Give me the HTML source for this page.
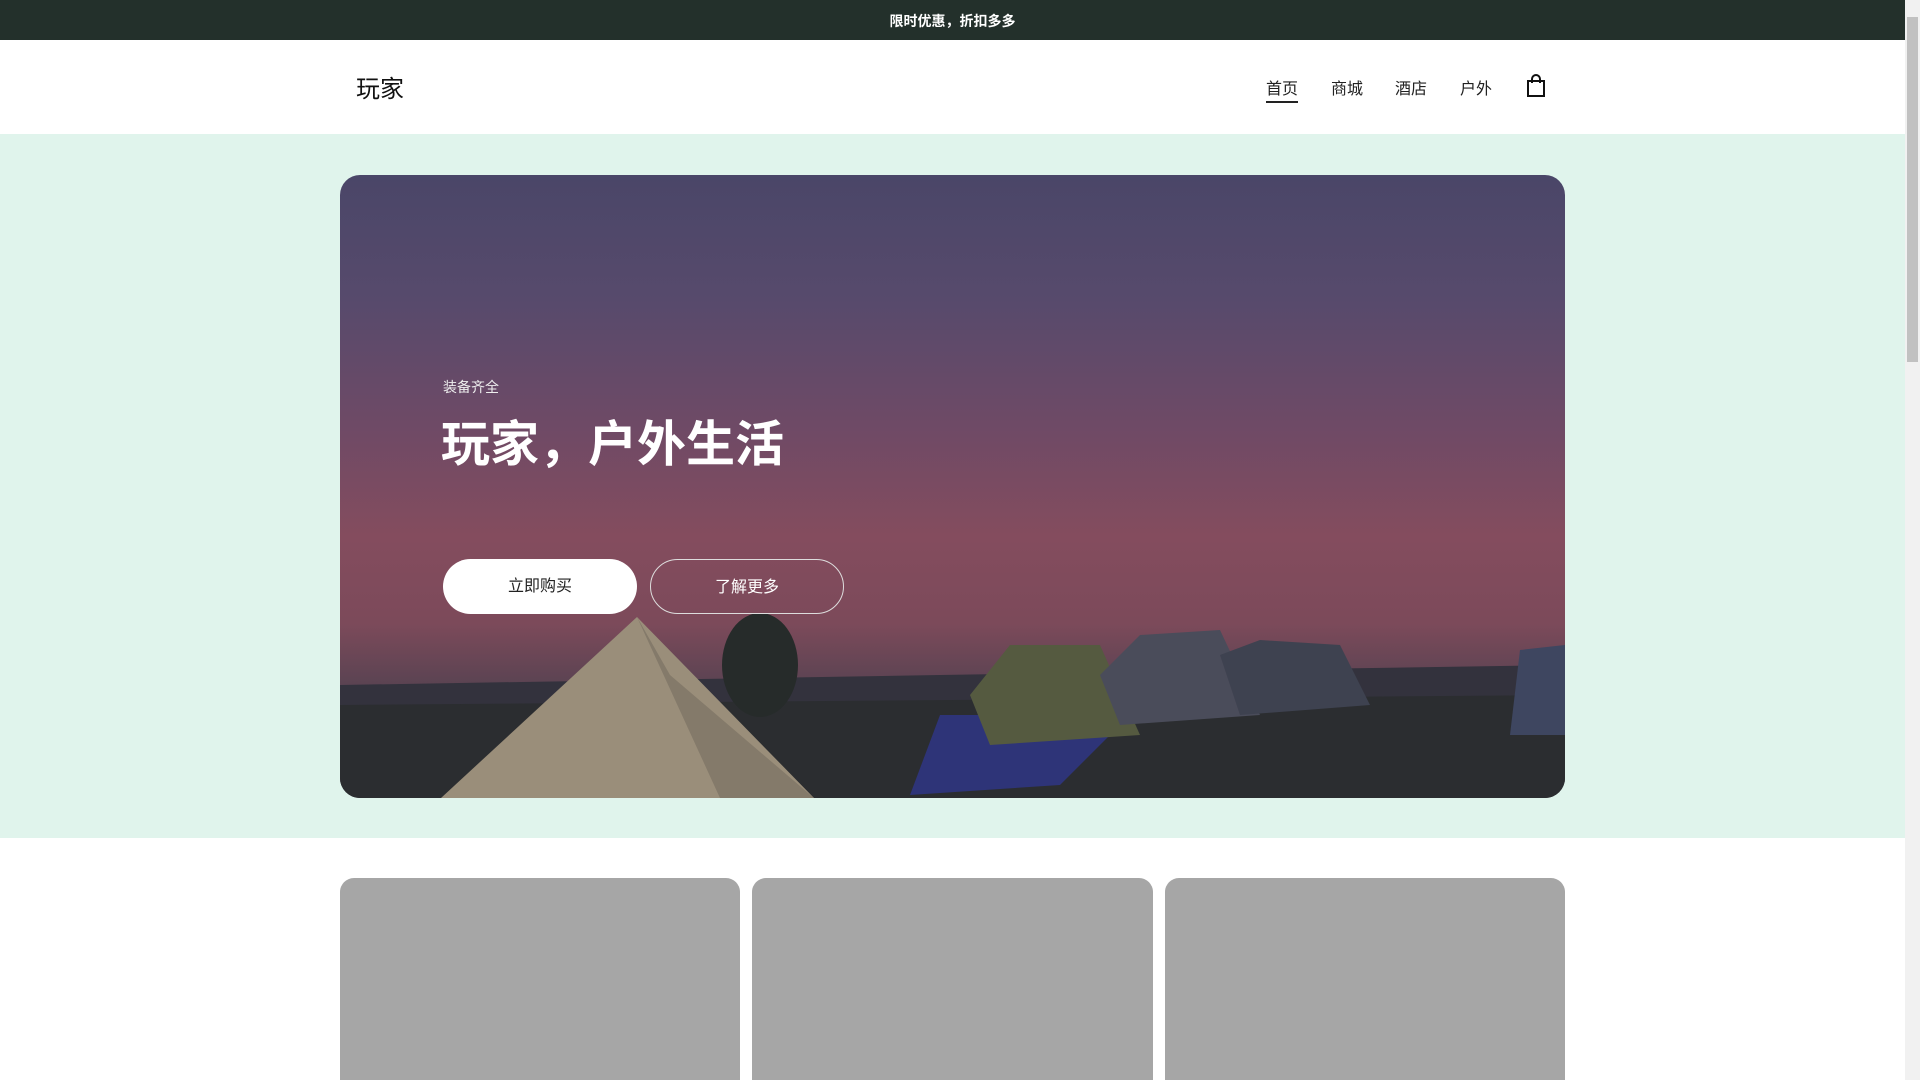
<!DOCTYPE html>
<html><head><meta charset="utf-8">
<style>
*{margin:0;padding:0;box-sizing:border-box}
html,body{width:1920px;height:1080px;overflow:hidden}
body{font-family:"Liberation Sans","Noto Sans CJK SC",sans-serif;background:#fff;position:relative}
#w{position:absolute;left:0;top:0;width:1905px;height:1080px;overflow:hidden}
.top{height:40px;background:#23302b;color:#fff;font-weight:bold;font-size:14px;text-align:center;line-height:42px;}
.nav a{position:absolute;top:80px;font-size:16px;color:#222;text-decoration:none;line-height:20px}
.mint{background:#e0f4ec;height:704px;position:relative;margin-top:94px}
.hero{position:absolute;left:340px;top:41px;width:1225px;height:623px;border-radius:20px;overflow:hidden;
background:linear-gradient(180deg,#4a4668 0%,#574a6c 20%,#6e4a66 40%,#844c5e 58%,#7c4a5a 72%,#5a4352 82%);}
.sub{position:absolute;left:103px;top:202px;color:#eee;font-size:14px}
.title{position:absolute;left:101px;top:240px;color:#fff;font-size:49px;font-weight:bold;line-height:60px}
.btn{position:absolute;top:384px;width:194px;height:55px;border-radius:28px;font-size:16px;text-align:center;line-height:55px}
.b1{left:103px;background:#fff;color:#222}
.b2{left:310px;border:1.5px solid #ddd;color:#fff}
.cards{position:absolute;top:878px;left:340px;width:1225px;display:flex;gap:12px}
.card{flex:1;height:300px;background:#a6a6a6;border-radius:14px}
#sb{position:absolute;right:0;top:0;width:15px;height:1080px;background:#f1f1f1}
#th{position:absolute;left:2px;top:17px;width:11px;height:345px;background:#c1c1c1}
</style></head><body>
<div id="w">
<div class="top">限时优惠，折扣多多</div>
<div style="position:absolute;left:356px;top:69px;font-size:24px;color:#111;">玩家</div>
<div class="nav">
<a style="left:1266px;border-bottom:2px solid #222;padding-bottom:1px">首页</a>
<a style="left:1331px">商城</a>
<a style="left:1395px">酒店</a>
<a style="left:1460px">户外</a>
</div>
<svg style="position:absolute;left:1525px;top:74px" width="22" height="24" viewBox="0 0 22 24"><path d="M3 7h16v15H3z" fill="none" stroke="#111" stroke-width="2"/><path d="M7 9V5a4 4 0 0 1 8 0v4" fill="none" stroke="#111" stroke-width="2"/></svg>
<div class="mint">
<div class="hero">
<svg width="1225" height="623" viewBox="0 0 1225 623" style="position:absolute;left:0;top:0">
<path d="M0 510 L300 505 L600 500 L900 495 L1225 490 L1225 623 L0 623Z" fill="#33323d"/>
<path d="M0 530 L1225 520 L1225 623 L0 623Z" fill="#2b2d30"/>
<ellipse cx="420" cy="490" rx="38" ry="52" fill="#262b2a"/>
<path d="M600 540 L790 540 L720 610 L570 620Z" fill="#2e3478"/>
<path d="M630 520 L670 470 L760 470 L800 560 L650 570Z" fill="#555a40"/>
<path d="M760 500 L800 460 L880 455 L920 540 L780 550Z" fill="#4a4c5a"/>
<path d="M880 480 L920 465 L1000 470 L1030 530 L900 540Z" fill="#3e4250"/>
<path d="M1180 475 L1225 470 L1225 560 L1170 560Z" fill="#3e4660"/>
<path d="M297 442 L101 623 L474 623 Z" fill="#9a8e7a"/>
<path d="M297 442 L330 500 L474 623 L380 623Z" fill="#847a6a"/>
</svg>
<div class="sub">装备齐全</div>
<div class="title">玩家，户外生活</div>
<div class="btn b1">立即购买</div>
<div class="btn b2">了解更多</div>
</div>
</div>
<div class="cards"><div class="card"></div><div class="card"></div><div class="card"></div></div>
</div>
<div id="sb"><div id="th"></div></div>
</body></html>
